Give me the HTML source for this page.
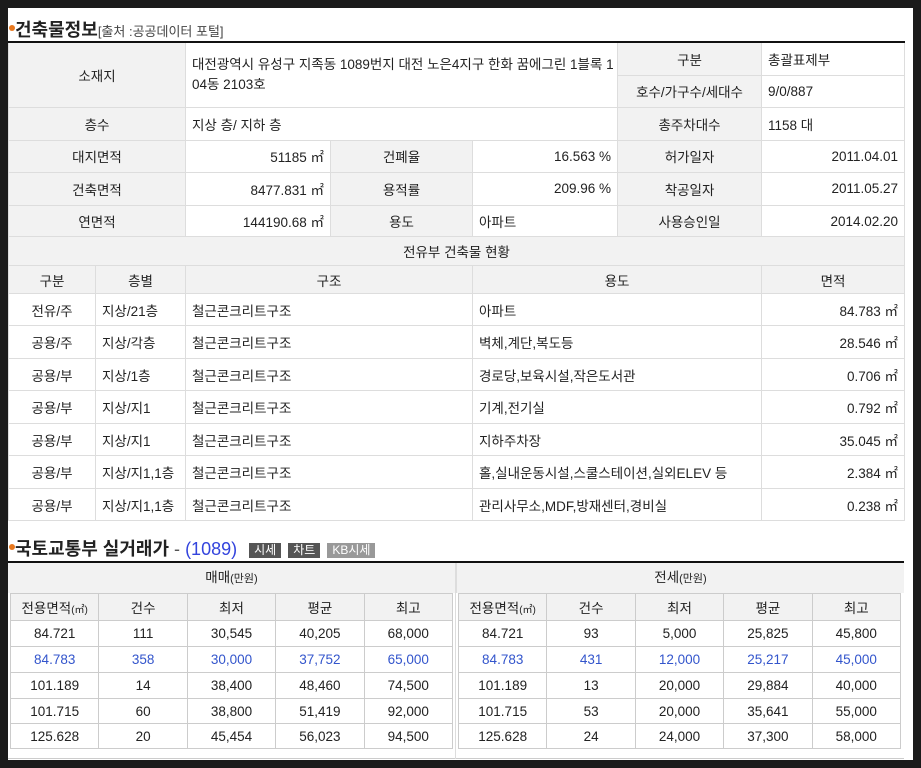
<!DOCTYPE html>
<html><head><meta charset="utf-8"><style>
*{margin:0;padding:0;box-sizing:border-box}
body{width:921px;height:768px;background:#1b1b1b;font-family:"Liberation Sans","Noto Sans CJK KR",sans-serif;font-size:13.5px;color:#222;overflow:hidden;position:relative}
#p{position:absolute;left:8px;top:8px;width:905px;height:752px;background:#fff}
.h{position:absolute;left:0;font-size:18px;font-weight:bold;color:#222;white-space:nowrap}
.h:before{content:"";position:absolute;left:-6px;top:9px;width:6px;height:6px;border-radius:50%;background:#e8781e}
.h .s{font-size:13px;font-weight:normal;color:#444}
table{border-collapse:collapse;table-layout:fixed;position:absolute}
td{border:1px solid #ddd;padding:0 6px;white-space:nowrap;overflow:hidden}
.g{background:#f2f2f2;text-align:center}
.c{text-align:center}.r{text-align:right}
.b td{color:#3355cc}
.btn{display:inline-block;font-size:12px;font-weight:normal;color:#fff;padding:0 5px;line-height:15px;vertical-align:middle;margin-left:2px}
.in td{border:1px solid #ccc;text-align:center;padding:0}
</style></head><body><div id="p">
<div class="h" style="top:8px;left:7px">건축물정보<span class="s">[출처 :공공데이터 포털]</span></div>
<table style="left:0;top:33px;width:896px;border-top:2px solid #111">
<colgroup><col style="width:177px"><col style="width:145px"><col style="width:142px"><col style="width:145px"><col style="width:144px"><col style="width:143px"></colgroup>
<tr style="height:33px"><td class="g" rowspan="2">소재지</td><td colspan="3" rowspan="2" style="line-height:20px;vertical-align:top;padding-top:12px">대전광역시 유성구 지족동 1089번지 대전 노은4지구 한화 꿈에그린 1블록 1<br>04동 2103호</td><td class="g">구분</td><td>총괄표제부</td></tr>
<tr style="height:32px"><td class="g">호수/가구수/세대수</td><td>9/0/887</td></tr>
<tr style="height:33px"><td class="g">층수</td><td colspan="3">지상 층/ 지하 층</td><td class="g">총주차대수</td><td>1158 대</td></tr>
<tr style="height:32px"><td class="g">대지면적</td><td class="r">51185 ㎡</td><td class="g">건폐율</td><td class="r">16.563 %</td><td class="g">허가일자</td><td class="r">2011.04.01</td></tr>
<tr style="height:33px"><td class="g">건축면적</td><td class="r">8477.831 ㎡</td><td class="g">용적률</td><td class="r">209.96 %</td><td class="g">착공일자</td><td class="r">2011.05.27</td></tr>
<tr style="height:32px"><td class="g">연면적</td><td class="r">144190.68 ㎡</td><td class="g">용도</td><td>아파트</td><td class="g">사용승인일</td><td class="r">2014.02.20</td></tr>
</table>
<table style="left:0;top:228px;width:896px">
<colgroup><col style="width:87px"><col style="width:90px"><col style="width:287px"><col style="width:289px"><col style="width:143px"></colgroup>
<tr style="height:29px"><td class="g" colspan="5">전유부 건축물 현황</td></tr>
<tr style="height:28px"><td class="g">구분</td><td class="g">층별</td><td class="g">구조</td><td class="g">용도</td><td class="g">면적</td></tr>
<tr style="height:32px"><td class="c">전유/주</td><td>지상/21층</td><td>철근콘크리트구조</td><td>아파트</td><td class="r">84.783 ㎡</td></tr>
<tr style="height:33px"><td class="c">공용/주</td><td>지상/각층</td><td>철근콘크리트구조</td><td>벽체,계단,복도등</td><td class="r">28.546 ㎡</td></tr>
<tr style="height:32px"><td class="c">공용/부</td><td>지상/1층</td><td>철근콘크리트구조</td><td>경로당,보육시설,작은도서관</td><td class="r">0.706 ㎡</td></tr>
<tr style="height:33px"><td class="c">공용/부</td><td>지상/지1</td><td>철근콘크리트구조</td><td>기계,전기실</td><td class="r">0.792 ㎡</td></tr>
<tr style="height:32px"><td class="c">공용/부</td><td>지상/지1</td><td>철근콘크리트구조</td><td>지하주차장</td><td class="r">35.045 ㎡</td></tr>
<tr style="height:33px"><td class="c">공용/부</td><td>지상/지1,1층</td><td>철근콘크리트구조</td><td>홀,실내운동시설,스쿨스테이션,실외ELEV 등</td><td class="r">2.384 ㎡</td></tr>
<tr style="height:32px"><td class="c">공용/부</td><td>지상/지1,1층</td><td>철근콘크리트구조</td><td>관리사무소,MDF,방재센터,경비실</td><td class="r">0.238 ㎡</td></tr>
</table>
<div class="h" style="top:527px;left:7px">국토교통부 실거래가 <span style="font-weight:normal;color:#555">-</span> <span style="font-weight:normal;color:#3344dd">(1089)</span> &nbsp;<span class="btn" style="background:#555">시세</span> <span class="btn" style="background:#555">차트</span> <span class="btn" style="background:#999">KB시세</span></div>
<div style="position:absolute;left:0;top:553px;width:896px;height:198px;border-top:2px solid #111;border-bottom:1px solid #ccc">
<div style="position:absolute;left:0;top:0;width:448px;height:30px;background:#f2f2f2;border-right:1px solid #ddd;text-align:center;line-height:29px">매매<span style="font-size:11px">(만원)</span></div>
<div style="position:absolute;left:448px;top:0;width:448px;height:30px;background:#f2f2f2;border-left:1px solid #ddd;text-align:center;line-height:29px">전세<span style="font-size:11px">(만원)</span></div>
<div style="position:absolute;left:0;top:30px;width:448px;height:166px;border-right:1px solid #ddd"></div>
</div>
<table class="in" style="left:2px;top:585px;width:443px">
<tr style="height:27px" class="g"><td>전용면적<span style="font-size:10px">(㎡)</span></td><td>건수</td><td>최저</td><td>평균</td><td>최고</td></tr>
<tr style="height:26px"><td>84.721</td><td>111</td><td>30,545</td><td>40,205</td><td>68,000</td></tr>
<tr style="height:26px" class="b"><td>84.783</td><td>358</td><td>30,000</td><td>37,752</td><td>65,000</td></tr>
<tr style="height:26px"><td>101.189</td><td>14</td><td>38,400</td><td>48,460</td><td>74,500</td></tr>
<tr style="height:25px"><td>101.715</td><td>60</td><td>38,800</td><td>51,419</td><td>92,000</td></tr>
<tr style="height:25px"><td>125.628</td><td>20</td><td>45,454</td><td>56,023</td><td>94,500</td></tr>
</table>
<table class="in" style="left:450px;top:585px;width:443px">
<tr style="height:27px" class="g"><td>전용면적<span style="font-size:10px">(㎡)</span></td><td>건수</td><td>최저</td><td>평균</td><td>최고</td></tr>
<tr style="height:26px"><td>84.721</td><td>93</td><td>5,000</td><td>25,825</td><td>45,800</td></tr>
<tr style="height:26px" class="b"><td>84.783</td><td>431</td><td>12,000</td><td>25,217</td><td>45,000</td></tr>
<tr style="height:26px"><td>101.189</td><td>13</td><td>20,000</td><td>29,884</td><td>40,000</td></tr>
<tr style="height:25px"><td>101.715</td><td>53</td><td>20,000</td><td>35,641</td><td>55,000</td></tr>
<tr style="height:25px"><td>125.628</td><td>24</td><td>24,000</td><td>37,300</td><td>58,000</td></tr>
</table>
</div></body></html>
